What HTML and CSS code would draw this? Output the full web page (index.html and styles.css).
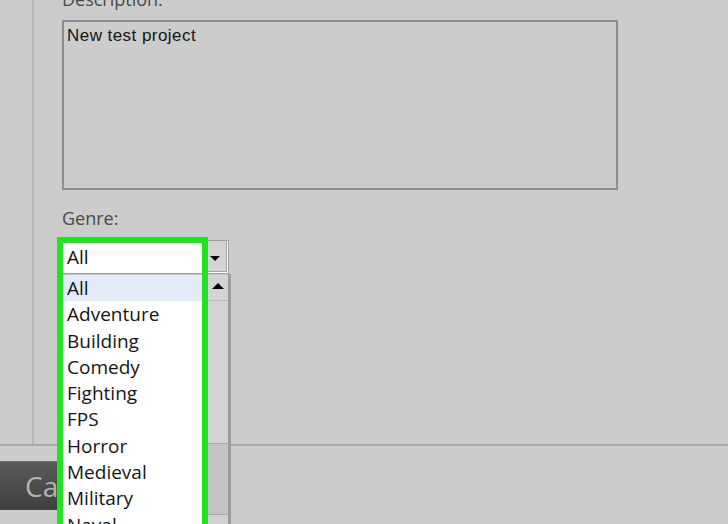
FILE: index.html
```html
<!DOCTYPE html>
<html lang="en">
<head>
    <meta charset="UTF-8">
    <meta name="viewport" content="width=device-width, initial-scale=1.0">
    <title>New Project</title>
    <link rel="stylesheet" href="styles.css">
</head>
<body>
    <!-- Project settings panel -->
    <section class="panel">
        <div class="column">
            <label class="field-label label-description">Description:</label>
            <div class="textarea">New test project</div>

            <label class="field-label label-genre">Genre:</label>
            <div class="genre-field">
                <div class="select">
                    <span class="select-value">All</span>
                    <span class="select-btn"><span class="arrow-down"></span></span>
                </div>

                <!-- Open dropdown list -->
                <div class="dropdown">
                    <ul class="option-list">
                        <li class="option selected">All</li>
                        <li class="option">Adventure</li>
                        <li class="option">Building</li>
                        <li class="option">Comedy</li>
                        <li class="option">Fighting</li>
                        <li class="option">FPS</li>
                        <li class="option">Horror</li>
                        <li class="option">Medieval</li>
                        <li class="option">Military</li>
                        <li class="option">Naval</li>
                    </ul>
                    <div class="scrollbar">
                        <div class="sb-btn"><span class="arrow-up"></span></div>
                        <div class="sb-track"></div>
                        <div class="sb-thumb"></div>
                        <div class="sb-rest"></div>
                    </div>
                </div>

                <!-- Highlight frame -->
                <div class="highlight"></div>
            </div>
        </div>
    </section>

    <footer class="footer">
        <button class="cancel-btn">Cancel</button>
    </footer>
</body>
</html>
```

FILE: styles.css
```css
/* General Reset */
* {
    margin: 0;
    padding: 0;
    box-sizing: border-box;
}

body {
    width: 728px;
    height: 524px;
    overflow: hidden;
    background-color: #cccccc;
    font-family: "Open Sans", "Noto Sans", sans-serif;
    color: #111;
}

/* Panel */
.panel {
    height: 446px;
    border-bottom: 2px solid #a9a9a9;
}

.column {
    display: flex;
    flex-direction: column;
    align-items: flex-start;
    height: 444px;
    margin-left: 32px;
    padding-left: 28px;
    border-left: 2px solid #b6b6b6;
}

.field-label {
    font-size: 18px;
    line-height: 20px;
    color: #4a4a4a;
}

.label-description {
    margin-top: -11px;
}

.label-genre {
    margin-top: 18px;
}

.textarea {
    width: 556px;
    height: 170px;
    margin-top: 11px;
    padding: 4px 3px;
    border: 2px solid #8e8e8e;
    font-family: "Liberation Sans", Arial, sans-serif;
    font-size: 17px;
    line-height: 20px;
    letter-spacing: 0.45px;
    color: #151515;
}

/* Genre select */
.genre-field {
    position: relative;
    width: 168px;
    margin-top: 12px;
    margin-left: -1px;
}

.select {
    display: flex;
    height: 34px;
    background: #fff;
    border: 1px solid #9e9e9e;
}

.select-value {
    flex: 1;
    padding-left: 5px;
    font-size: 19px;
    line-height: 32px;
}

.select-btn {
    display: flex;
    align-items: center;
    justify-content: center;
    width: 24px;
    margin: 0 1px 1px 0;
    padding-top: 4px;
    background: #d3d3d3;
    border: 1px solid #a3a3a3;
    border-top: none;
}

.arrow-down {
    width: 0;
    height: 0;
    border-left: 5px solid transparent;
    border-right: 5px solid transparent;
    border-top: 5px solid #000;
}

.arrow-up {
    width: 0;
    height: 0;
    border-left: 6px solid transparent;
    border-right: 6px solid transparent;
    border-bottom: 6px solid #000;
}

/* Dropdown list */
.dropdown {
    position: absolute;
    top: 34px;
    left: 0;
    display: flex;
    width: 167px;
    height: 260px;
    overflow: hidden;
    background: #fff;
    border-top: 1px solid #c6c6c6;
    box-shadow: 3px 0 0 #9c9c9c;
}

.option-list {
    flex: 1;
    list-style: none;
}

.option {
    padding-left: 6px;
    font-size: 19px;
    line-height: 26.3px;
    color: #151515;
}

.option.selected {
    background: #e3ebf8;
}

.scrollbar {
    display: flex;
    flex-direction: column;
    width: 20px;
    background: #d0d0d0;
}

.sb-btn {
    display: flex;
    align-items: center;
    justify-content: center;
    height: 26px;
    padding-bottom: 4px;
    background: #d4d4d4;
    border-bottom: 1px solid #b8b8b8;
}

.sb-track {
    height: 142px;
    background: #d3d3d3;
}

.sb-thumb {
    height: 72px;
    background: #c3c3c3;
    border-top: 1px solid #a8a8a8;
    border-bottom: 1px solid #a8a8a8;
}

.sb-rest {
    flex: 1;
    background: #d2d2d2;
}

.highlight {
    position: absolute;
    top: -3px;
    left: -4px;
    width: 151px;
    height: 300px;
    border: 6px solid #22e322;
}

/* Footer */
.footer {
    padding-top: 15px;
}

.cancel-btn {
    display: block;
    width: 150px;
    height: 49px;
    padding-left: 25px;
    text-align: left;
    font-family: "Open Sans", "Noto Sans", sans-serif;
    font-size: 28px;
    color: #b3b3b3;
    background: linear-gradient(#5a5a5a, #3f3f3f);
    border: none;
    border-top: 1px solid #6a6a6a;
}
```
